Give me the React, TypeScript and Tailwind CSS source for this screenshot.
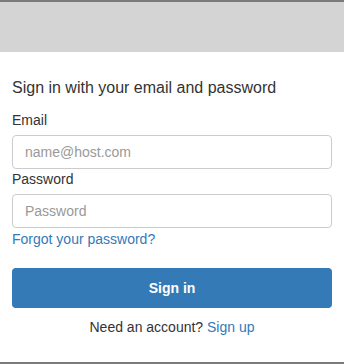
export default function App() {
  return (
    <div
      className="flex h-[364px] w-[344px] flex-col border-y-2 border-[#7b7b7b] bg-white text-[#333333]"
      style={{ fontFamily: '"Liberation Sans", Arial, sans-serif' }}
    >
      <div className="h-[50px] shrink-0 bg-[#d4d4d4]" />
      <div className="flex flex-col px-3">
        <h1 className="mt-[26px] text-[16px] leading-[20px] font-normal">
          Sign in with your email and password
        </h1>
        <label className="mt-[12px] text-[14px] leading-[20px]">Email</label>
        <input
          type="text"
          placeholder="name@host.com"
          className="mt-[5px] h-[34px] w-full rounded-[4px] border border-[#cccccc] px-3 text-[14px] text-[#555] placeholder:text-[#999999] outline-none"
        />
        <label className="text-[14px] leading-[20px]">Password</label>
        <input
          type="password"
          placeholder="Password"
          className="mt-[5px] h-[34px] w-full rounded-[4px] border border-[#cccccc] px-3 text-[14px] text-[#555] placeholder:text-[#999999] outline-none"
        />
        <a href="#" className="mt-[1px] self-start text-[14px] leading-[20px] text-[#337ab7]">
          Forgot your password?
        </a>
        <button className="mt-[19px] h-[40px] w-full rounded-[4px] bg-[#337ab7] text-[14px] font-bold text-white">
          Sign in
        </button>
        <p className="mt-[9px] text-center text-[14px] leading-[20px]">
          Need an account? <a href="#" className="text-[#337ab7]">Sign up</a>
        </p>
      </div>
    </div>
  );
}
